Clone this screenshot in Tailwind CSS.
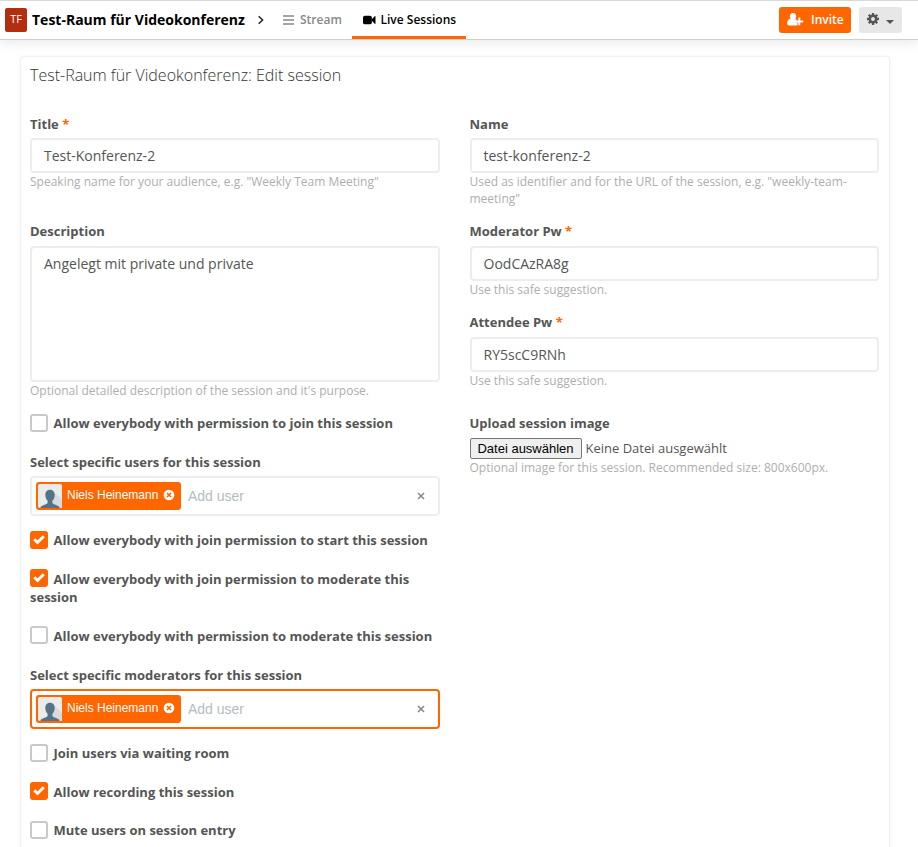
<!DOCTYPE html>
<html lang="en">
<head>
<meta charset="utf-8">
<title>Edit session</title>
<script src="https://cdn.jsdelivr.net/npm/@tailwindcss/browser@4"></script>
</head>
<body class="h-[847px] overflow-hidden bg-white font-['Open_Sans',sans-serif] text-[13px] leading-[18px] text-[#555]">
<svg class="hidden">
  <symbol id="avatar" viewBox="0 0 24 24">
    <rect width="24" height="24" rx="2" fill="#ebebeb"/>
    <path d="M16 8l8 8v8H12z" fill="#d8dadb"/>
    <path d="M12 5.800c-3 0-4.700 2.200-4.700 5 0 2.800 1 4.700 2.300 6v2.200c-1 1.600-5 1.800-7.100 4v1h19v-1c-2.100-2.200-6.100-2.400-7.100-4v-2.200c1.300-1.300 2.300-3.200 2.300-6 0-2.800-1.700-5-4.700-5z" fill="#557388"/>
  </symbol>
  <symbol id="remove" viewBox="0 0 12 12">
    <circle cx="6" cy="6" r="5.300" fill="#fff"/>
    <path d="M4 4l4 4M8 4L4 8" stroke="#ff6600" stroke-width="1.700"/>
  </symbol>
  <symbol id="check" viewBox="0 0 18 18">
    <path d="M4.300 8.300l3.200 3.200 6.300-6.300" fill="none" stroke="#fff" stroke-width="2.900"/>
  </symbol>
</svg>

<header class="relative flex h-10 border-t border-b border-t-[#d9d9d9] border-b-[#cfcfcf] bg-white pl-[5px] shadow-[0_2px_12px_rgba(0,0,0,0.1)]">
  <div class="mt-[7px] flex h-6 w-[22px] items-center justify-center rounded-[2px] bg-[#b32d0f] pb-[3px] text-[11px] text-white">TF</div>
  <div class="ml-[5px] mt-[9px] w-[213px] whitespace-nowrap text-[14px] font-bold leading-5 text-black">Test-Raum für Videokonferenz</div>
  <svg class="ml-[12px] mt-[14px] h-[10px] w-[8px]" viewBox="0 0 8 10"><path d="M1.700 1.200L5.600 5 1.700 8.800" fill="none" stroke="#222" stroke-width="1.500"/></svg>
  <div class="ml-[18px] flex w-[69px] pt-[10px] text-[12px] font-semibold text-[#888]">
    <svg class="mt-[4px] mr-[6px] h-[10px] w-[11px] shrink-0" viewBox="0 0 11 10"><path d="M0 1h11M0 5h11M0 9h11" stroke="#888" stroke-width="1.300"/></svg>
    <span class="whitespace-nowrap">Stream</span>
  </div>
  <div class="flex h-[38px] w-[114px] border-b-[3px] border-[#ff6600] pl-[11px] pt-[10px] text-[12px] font-semibold text-black">
    <svg class="mt-[4px] mr-[5px] h-[10px] w-[12.500px] shrink-0" viewBox="0 0 13 10"><rect x="0" y=".5" width="9.200" height="9" rx="2" fill="#000"/><path d="M8.500 5l3.600-3.900q.9-.4.900.4v7q0 .8-.9.400z" fill="#000"/></svg>
    <span class="whitespace-nowrap">Live Sessions</span>
  </div>
  <div class="ml-auto mr-4 flex gap-2 pt-[6px]">
    <div class="flex h-[26px] w-[72px] items-center rounded-[3px] bg-[#ff6600] pl-2 font-semibold text-white">
      <svg class="mr-[7px] mb-[2px] h-[13px] w-[17px] shrink-0" viewBox="0 0 17 13"><ellipse cx="6" cy="3.600" rx="3.100" ry="3.600" fill="#fff"/><path d="M3.200 5.800c-2 .5-3 2-3 4.700 0 1.200.8 2 2 2h8.300V9.600H9V7.400h1.100C9.600 6.500 9 6 8.600 5.900 7 7.300 5 7.300 3.200 5.800z" fill="#fff"/><path d="M12.300 4.500v7.800M8.700 8.500h7.500" stroke="#fff" stroke-width="1.900"/></svg>
      <span class="pb-px text-[12px]">Invite</span>
    </div>
    <div class="flex h-[26px] w-[43px] items-center rounded-[3px] bg-[#e7e7e7] pl-2">
      <svg class="mb-[2px] h-3 w-3" viewBox="0 0 12 12"><circle cx="6" cy="6" r="3.200" fill="none" stroke="#555" stroke-width="2.500"/><path d="M6 0v2.500M6 9.500V12M0 6h2.500M9.500 6H12M1.760 1.760l1.700 1.700M8.540 8.540l1.700 1.700M10.240 1.760l-1.700 1.700M3.460 8.540l-1.700 1.700" stroke="#555" stroke-width="2.300"/></svg>
      <svg class="ml-[7px] mt-[3px] h-1 w-2" viewBox="0 0 8 4"><path d="M0 0h8L4 4z" fill="#555"/></svg>
    </div>
  </div>
</header>

<main class="ml-5 mt-4 h-[820px] w-[870px] rounded-[4px] border border-[#f1f1f1] bg-white px-[9px] shadow-[0_0_3px_rgba(0,0,0,0.06)]">
  <h1 class="mt-[8px] h-5 whitespace-nowrap text-[16px] font-light leading-5 text-[#333]">Test-Raum für Videokonferenz: Edit session</h1>

  <form class="mt-[30px] grid grid-cols-[410px_409.500px] gap-x-[29.500px]">
    <section class="h-[107px]">
      <label class="block font-bold">Title <span class="text-[#ff6600]">*</span></label>
      <div class="mt-[5px] flex h-[35px] items-center rounded-[4px] border-2 border-[#ededed] px-3 text-[14px]">Test-Konferenz-2</div>
      <p class="text-[12px] leading-[17px] text-[#aeaeae]">Speaking name for your audience, e.g. "Weekly Team Meeting"</p>
    </section>
    <section class="h-[107px]">
      <label class="block font-bold">Name</label>
      <div class="mt-[5px] flex h-[35px] items-center rounded-[4px] border-2 border-[#ededed] px-3 text-[14px]">test-konferenz-2</div>
      <p class="text-[12px] leading-[17px] text-[#aeaeae]">Used as identifier and for the URL of the session, e.g. "weekly-team-meeting"</p>
    </section>

    <section class="h-[192px]">
      <label class="block font-bold">Description</label>
      <div class="mt-[6px] h-[136px] rounded-[4px] border-2 border-[#ededed] px-3 pt-[7px] text-[14px]">Angelegt mit private und private</div>
      <p class="text-[12px] leading-[17px] text-[#aeaeae]">Optional detailed description of the session and it's purpose.</p>
    </section>
    <section class="h-[192px]">
      <label class="block font-bold">Moderator Pw <span class="text-[#ff6600]">*</span></label>
      <div class="mt-[6px] flex h-[35px] items-center rounded-[4px] border-2 border-[#ededed] px-3 text-[14px]">OodCAzRA8g</div>
      <p class="text-[12px] leading-[17px] text-[#aeaeae]">Use this safe suggestion.</p>
      <label class="mt-[15px] block font-bold">Attendee Pw <span class="text-[#ff6600]">*</span></label>
      <div class="mt-[6px] flex h-[35px] items-center rounded-[4px] border-2 border-[#ededed] px-3 text-[14px]">RY5scC9RNh</div>
      <p class="text-[12px] leading-[17px] text-[#aeaeae]">Use this safe suggestion.</p>
    </section>

    <section>
      <label class="flex gap-[5.500px] font-bold"><span class="size-[18px] shrink-0 rounded-[3px] border-2 border-[#c9c9c9]"></span>Allow everybody with permission to join this session</label>

      <label class="mt-[21px] block font-bold">Select specific users for this session</label>
      <div class="mt-[5px] flex h-10 items-center rounded-[4px] border-2 border-[#ededed] pl-1 font-['Liberation_Sans',sans-serif]">
        <div class="flex h-7 w-[145px] items-center rounded-[3px] bg-[#ff6600] pl-[2px] text-[12px] text-white">
          <svg class="size-6 shrink-0"><use href="#avatar"/></svg>
          <span class="ml-[5px] whitespace-nowrap pb-[2px]">Niels Heinemann</span>
          <svg class="mb-[2px] ml-[5px] size-3 shrink-0"><use href="#remove"/></svg>
        </div>
        <span class="ml-[7px] text-[14px] text-[#b4bcc2]">Add user</span>
        <svg class="ml-auto mr-[13px] size-[8px]" viewBox="0 0 8 8"><path d="M1 1l6 6M7 1L1 7" stroke="#8c8c8c" stroke-width="1.700"/></svg>
      </div>

      <label class="mt-[15px] flex gap-[5.500px] font-bold"><svg class="size-[18px] shrink-0 rounded-[3px] bg-[#ff6600]"><use href="#check"/></svg>Allow everybody with join permission to start this session</label>

      <label class="mt-[21px] block font-bold"><svg class="-mt-[5px] mr-[5.500px] inline-block size-[18px] rounded-[3px] bg-[#ff6600] align-middle"><use href="#check"/></svg>Allow everybody with join permission to moderate this session</label>

      <label class="mt-[20px] flex gap-[5.500px] font-bold"><span class="size-[18px] shrink-0 rounded-[3px] border-2 border-[#c9c9c9]"></span><span class="pt-px">Allow everybody with permission to moderate this session</span></label>

      <label class="mt-[21px] block font-bold">Select specific moderators for this session</label>
      <div class="mt-[5px] flex h-10 items-center rounded-[4px] border-2 border-[#ff6600] pl-1 font-['Liberation_Sans',sans-serif]">
        <div class="flex h-7 w-[145px] items-center rounded-[3px] bg-[#ff6600] pl-[2px] text-[12px] text-white">
          <svg class="size-6 shrink-0"><use href="#avatar"/></svg>
          <span class="ml-[5px] whitespace-nowrap pb-[2px]">Niels Heinemann</span>
          <svg class="mb-[2px] ml-[5px] size-3 shrink-0"><use href="#remove"/></svg>
        </div>
        <span class="ml-[7px] text-[14px] text-[#b4bcc2]">Add user</span>
        <svg class="ml-auto mr-[13px] size-[8px]" viewBox="0 0 8 8"><path d="M1 1l6 6M7 1L1 7" stroke="#8c8c8c" stroke-width="1.700"/></svg>
      </div>

      <label class="mt-[15px] flex gap-[5.500px] font-bold"><span class="size-[18px] shrink-0 rounded-[3px] border-2 border-[#c9c9c9]"></span>Join users via waiting room</label>
      <label class="mt-[20px] flex h-[19px] gap-[5.500px] font-bold"><svg class="size-[18px] shrink-0 rounded-[3px] bg-[#ff6600]"><use href="#check"/></svg><span class="pt-px">Allow recording this session</span></label>
      <label class="mt-[20px] flex gap-[5.500px] font-bold"><span class="size-[18px] shrink-0 rounded-[3px] border-2 border-[#c9c9c9]"></span>Mute users on session entry</label>
    </section>
    <section>
      <label class="block font-bold">Upload session image</label>
      <div class="mt-[6px] flex h-[21px] items-center gap-1">
        <button type="button" class="h-[21px] w-[112px] whitespace-nowrap rounded-[2px] border border-[#767676] bg-[#efefef] font-['Liberation_Sans',sans-serif] text-[13px] leading-[18px] text-black">Datei auswählen</button>
        <span class="pb-[2px]">Keine Datei ausgewählt</span>
      </div>
      <p class="text-[12px] leading-[17px] text-[#aeaeae]">Optional image for this session. Recommended size: 800x600px.</p>
    </section>
  </form>
</main>
</body>
</html>
